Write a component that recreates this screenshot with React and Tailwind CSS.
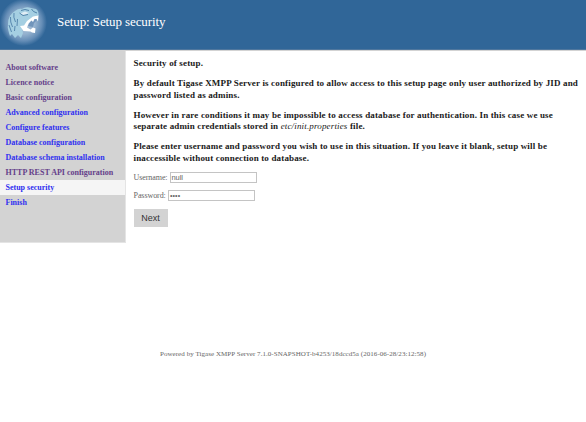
const menu = [
  { label: 'About software', visited: true },
  { label: 'Licence notice', visited: true },
  { label: 'Basic configuration', visited: true },
  { label: 'Advanced configuration' },
  { label: 'Configure features' },
  { label: 'Database configuration' },
  { label: 'Database schema installation' },
  { label: 'HTTP REST API configuration', visited: true },
  { label: 'Setup security', active: true },
  { label: 'Finish' },
];

function TigerLogo() {
  return (
    <svg viewBox="0 0 48 49" className="h-[49px] w-12 shrink-0" aria-hidden="true">
      <defs>
        <radialGradient id="glow">
          <stop offset="0" stopColor="#b4cbe0" />
          <stop offset="0.5" stopColor="#94b1ce" />
          <stop offset="0.78" stopColor="#668eb7" />
          <stop offset="1" stopColor="#306698" />
        </radialGradient>
      </defs>
      <circle cx="23.5" cy="22.500" r="23.500" fill="url(#glow)" />
      <path d="M9 33Q7 28 8 24Q8 15 15 11Q19 8 22 9Q26 6 31 8L36 9Q39 11 38.500 16L35 18L29 22L25 26L22 29L23 33L21 38L18 35L15 38L12 34L10 36Z" fill="#a5cfe2" />
      <path d="M28 26 31 19 37 17 37 20 34 23 33 27Z" fill="#7195bb" />
      <path d="M20 26 24 25.500 27 21 33 16.500 38.500 15.500 38 21.500 36.500 19 34.500 19 33 22 31.500 20.500 28.500 23.500 27 27.500 30.500 29.500 33 27.500 35.500 28.500 35 33 32 32.500 30.500 31.500 23.500 31Z" fill="#fff" />
      <path d="M20 13.500 25 11.500 29 13 24 15.500Z" fill="#e0edf5" />
      <path d="M19.500 13 23 15.500 28 14.500M31.500 9 33.500 11.500 37 13M21 10.500Q25 8.500 29 10.500" fill="none" stroke="#477aa4" strokeWidth="0.9" />
      <path d="M14 13Q13 17 15.500 22M10.500 17Q10 22 12.500 27M9 25 11.500 32M17.500 19 17 26M15 26 14.500 31" fill="none" stroke="#4e7fa8" strokeWidth="0.9" />
    </svg>
  );
}

export default function App() {
  return (
    <div className="h-[422px] w-[586px] overflow-hidden bg-white font-['Liberation_Serif',serif] text-[9px] whitespace-nowrap">
      <header className="flex h-[50px] border-b border-[#4f779e] bg-[#306698]">
        <TigerLogo />
        <h1 className="pt-[14px] pl-[9px] text-[13px] leading-4 tracking-[-0.1px] text-white">Setup: Setup security</h1>
      </header>
      <div className="flex h-[193px] border-t border-[#d3d3d3]">
        <nav className="w-[126px] shrink-0 border-r border-b border-[#e4e4e4] bg-[#d3d3d3] pt-[9px] text-[8px] font-bold">
          {menu.map((m) => (
            <div key={m.label} className={`h-[15px] pl-[5.5px] leading-[15px] ${m.active ? 'bg-[#f5f5f5]' : ''} ${m.visited ? 'text-[#65408a]' : 'text-[#3030f0]'}`}>
              {m.label}
            </div>
          ))}
        </nav>
        <main className="-mt-px grow border-t border-[#d3d3d3] pt-[7px] pl-[7.5px] text-[#666]">
          <div className="flex flex-col gap-[9px] font-bold leading-[11.25px] tracking-[0.155px] text-[#1a1a1a]">
            <p>Security of setup.</p>
            <p>
              By default Tigase XMPP Server is configured to allow access to this setup page only user authorized by JID and<br />
              password listed as admins.
            </p>
            <p>
              However in rare conditions it may be impossible to access database for authentication. In this case we use<br />
              separate admin credentials stored in <i className="font-normal">etc/init.properties</i> file.
            </p>
            <p>
              Please enter username and password you wish to use in this situation. If you leave it blank, setup will be<br />
              inaccessible without connection to database.
            </p>
          </div>
          <div className="mt-2 flex h-[11px] items-center text-[8px] tracking-[-0.07px]">
            <span className="w-9 pt-px">Username:</span>
            <span className="h-[11px] w-[87px] border border-[#c4c4c4] pl-px font-['Liberation_Sans',sans-serif] text-[7.5px] leading-[9px]">null</span>
          </div>
          <div className="mt-[7.5px] flex h-[11px] items-center text-[8px] tracking-[-0.07px]">
            <span className="w-[34.5px] pt-px">Password:</span>
            <span className="h-[11px] w-[87px] border border-[#c4c4c4] pl-px font-['Liberation_Sans',sans-serif] text-[7px] leading-[9px] tracking-[0.1px]">••••</span>
          </div>
          <button className="mt-[7.5px] block h-[18px] w-[34px] bg-[#d3d3d3] font-['Liberation_Sans',sans-serif] text-[9px] leading-[18px] text-[#333]">Next</button>
        </main>
      </div>
      <footer className="pt-[106px] text-center text-[7px] leading-[11px] tracking-[0.05px] text-[#666]">Powered by Tigase XMPP Server 7.1.0-SNAPSHOT-b4253/18dccd5a (2016-06-28/23:12:58)</footer>
    </div>
  );
}
